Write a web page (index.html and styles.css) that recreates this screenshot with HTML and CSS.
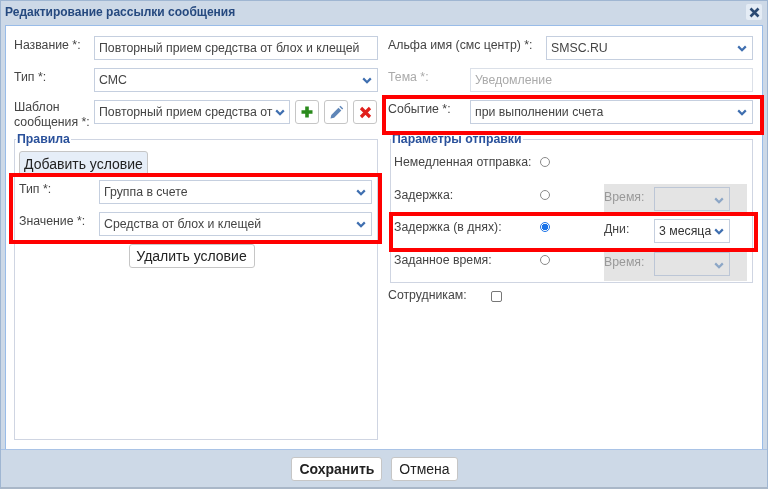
FILE: index.html
```html
<!DOCTYPE html>
<html lang="ru">
<head>
<meta charset="utf-8">
<title>Редактирование рассылки сообщения</title>
<link rel="stylesheet" href="styles.css">
</head>
<body>
<svg width="0" height="0" class="defs">
  <symbol id="chev" viewBox="0 0 10 7"><path d="M1.2 1.4 5 5.2l3.8-3.8" fill="none" stroke="currentColor" stroke-width="2.2"/></symbol>
</svg>
<div class="dialog">
  <header class="titlebar">
    <span class="title">Редактирование рассылки сообщения</span>
    <span class="close"><svg width="11" height="11" viewBox="0 0 11 11"><path d="M1.5 1.5l8 8M9.5 1.5l-8 8" stroke="#2b4a73" stroke-width="2.6"/></svg></span>
  </header>
  <main class="content">
    <section class="col col-left">
      <div class="row"><label class="lbl">Название *:</label><div class="field grow">Повторный прием средства от блох и клещей</div></div>
      <div class="row"><label class="lbl">Тип *:</label><div class="field grow select">СМС<svg class="chev"><use href="#chev"/></svg></div></div>
      <div class="row"><label class="lbl lbl-two">Шаблон сообщения *:</label>
        <div class="field select tpl"><span>Повторный прием средства от</span><svg class="chev"><use href="#chev"/></svg></div>
        <div class="iconbtns">
          <button class="iconbtn"><svg width="14" height="14" viewBox="0 0 14 14"><path d="M7 1.5v11M1.5 7h11" stroke="#2a8a1c" stroke-width="3.6"/></svg></button>
          <button class="iconbtn"><svg width="15" height="15" viewBox="0 0 15 15"><path d="M1.5 13.5l.8-3.6 7.2-7.2 2.8 2.8-7.2 7.2z" fill="#5f86b8"/><path d="M10.4 1.8l1-1 2.8 2.8-1 1z" fill="#5f86b8"/></svg></button>
          <button class="iconbtn"><svg width="13" height="13" viewBox="0 0 13 13"><path d="M2 2l9 9M11 2l-9 9" stroke="#e0201c" stroke-width="3.2"/></svg></button>
        </div>
      </div>
      <fieldset class="group rules">
        <legend>Правила</legend>
        <button class="btn add">Добавить условие</button>
        <div class="row cond"><label class="lbl lbl-cond">Тип *:</label><div class="field grow select">Группа в счете<svg class="chev"><use href="#chev"/></svg></div></div>
        <div class="row cond"><label class="lbl lbl-cond">Значение *:</label><div class="field grow select">Средства от блох и клещей<svg class="chev"><use href="#chev"/></svg></div></div>
        <div class="center"><button class="btn">Удалить условие</button></div>
      </fieldset>
    </section>
    <section class="col col-right">
      <div class="row"><label class="lbl lbl-alpha">Альфа имя (смс центр) *:</label><div class="field grow select">SMSC.RU<svg class="chev"><use href="#chev"/></svg></div></div>
      <div class="row"><label class="lbl lbl-r off">Тема *:</label><div class="field grow ph">Уведомление</div></div>
      <div class="row"><label class="lbl lbl-r">Событие *:</label><div class="field grow select">при выполнении счета<svg class="chev"><use href="#chev"/></svg></div></div>
      <fieldset class="group params">
        <legend>Параметры отправки</legend>
        <div class="send"><span class="slabel">Немедленная отправка:</span><span class="radio"></span></div>
        <div class="send"><span class="slabel">Задержка:</span><span class="radio"></span>
          <div class="extra gray"><span class="xlabel">Время:</span><div class="field mini dis select"><svg class="chev"><use href="#chev"/></svg></div></div></div>
        <div class="send"><span class="slabel">Задержка (в днях):</span><span class="radio on"></span>
          <div class="extra"><span class="xlabel dark">Дни:</span><div class="field mini select dark-t">3 месяца<svg class="chev"><use href="#chev"/></svg></div></div></div>
        <div class="send"><span class="slabel">Заданное время:</span><span class="radio"></span>
          <div class="extra gray"><span class="xlabel">Время:</span><div class="field mini dis select"><svg class="chev"><use href="#chev"/></svg></div></div></div>
      </fieldset>
      <div class="staff"><span class="slabel-staff">Сотрудникам:</span><span class="check"></span></div>
    </section>
  </main>
  <footer class="footer">
    <button class="btn save">Сохранить</button>
    <button class="btn">Отмена</button>
  </footer>
  <div class="mark m1"></div>
  <div class="mark m2"></div>
  <div class="mark m3"></div>
</div>
</body>
</html>
```
FILE: styles.css
```css
* { box-sizing: border-box; }
html, body { margin: 0; height: 100%; }
body { font: 12.3px "Liberation Sans", Arial, sans-serif; color: #444; background: #cdd9e7; overflow: hidden; }
.defs { position: absolute; }
.dialog { position: relative; height: 489px; display: flex; flex-direction: column; background: #cdd9e7; border-left: 1px solid #9fb6d2; border-right: 1px solid #9fb6d2; border-top: 1px solid #9fb6d2; border-bottom: 2px solid #a9b7c8; filter: blur(.35px); }
.titlebar { height: 24px; display: flex; align-items: center; justify-content: space-between; padding: 0 5px 3px 4px; }
.title { font-weight: 700; font-size: 12px; color: #25497f; }
.close { width: 16px; height: 16px; margin-top: 1px; background: #e4ecf5; border-radius: 2px; display: flex; align-items: center; justify-content: center; }
.content { flex: 1; margin: 0 4px; background: #fff; border: 1px solid #99bce8; border-bottom: 0; display: grid; grid-template-columns: 364px 364px; column-gap: 11px; padding: 10px 0 0 8px; }
.col { display: flex; flex-direction: column; }
.row { display: flex; align-items: flex-start; margin-bottom: 8px; height: 24px; }
.lbl { width: 80px; flex: none; line-height: 15px; padding-top: 2px; }
.lbl-two { margin-top: -2px; line-height: 15px; }
.lbl-alpha { width: 158px; }
.col-right .lbl { margin-left: -1px; }
.lbl-r { width: 82px; }
.off { color: #aaa; }
.field { height: 24px; border: 1px solid #c5cfdf; background: #fff; line-height: 23px; padding-left: 4px; color: #444; position: relative; white-space: nowrap; }
.grow { flex: 1; }
.select { padding-right: 20px; }
.ph { color: #aaa; border-color: #dbe0e8; }
.chev { position: absolute; right: 5px; top: 8px; width: 10px; height: 7px; color: #3f6fb0; }
.tpl { width: 196px; flex: none; padding-right: 16px; }
.tpl .chev { right: 4px; }
.iconbtns { display: flex; gap: 5px; margin-left: 5px; }
.iconbtn { width: 24px; height: 24px; padding: 0; display: flex; align-items: center; justify-content: center; background: #fff; border: 1px solid #c6c6c6; border-radius: 3px; }
.group { margin: 0; padding: 0; border: 1px solid #cfd5e2; position: relative; min-width: 0; }
.group legend { font-weight: 700; font-size: 12.3px; color: #2a519b; padding: 0 1px; margin-left: -3px; line-height: 14px; }
.rules { width: 364px; height: 308px; margin-top: 0; padding: 5px 5px 0 4px; }
.btn { height: 24px; padding: 0 7px; font: 14px "Liberation Sans", Arial, sans-serif; color: #222; background: #fff; border: 1px solid #c6c6c6; border-radius: 3px; }
.add { display: block; height: 25px; width: 129px; background: #e6eef8; padding: 0; margin-bottom: 4px; }
.cond { margin-bottom: 8px; }
.lbl-cond { width: 80px; }
.center { display: flex; justify-content: center; margin-top: 5px; padding-right: 8px; }
.center .btn { width: 126px; padding: 0; }
.params { width: 363px; height: 151px; margin-left: 1px; padding: 5px 0 0; }
.params legend { margin-left: 0; }
.send { display: flex; align-items: flex-start; height: 32.5px; padding-left: 3px; }
.slabel { width: 145px; flex: none; line-height: 15px; padding-top: 4px; }
.radio { width: 10px; height: 10px; border: 1px solid #8a8a8a; border-radius: 50%; flex: none; margin: 6px 0 0 1px; background: #fff; }
.radio.on { border: 1px solid #1a73e8; background: radial-gradient(circle, #1a73e8 0 3px, #fff 3.5px); }
.extra { margin-left: 54px; width: 143px; height: 32px; display: flex; align-items: flex-start; padding-top: 3px; }
.gray { background: #e4e4e4; }
.xlabel { width: 50px; flex: none; color: #999; line-height: 15px; padding-top: 3px; }
.xlabel.dark { color: #444; }
.mini { width: 76px; flex: none; padding-right: 0; }
.dis { background: #e4e4e4; border-color: #bcc6d6; }
.dis .chev { color: #8ca6c6; right: 3px; top: 9px; }
.dark-t { color: #333; }
.mini .chev { right: 5px; }
.staff { display: flex; align-items: flex-start; padding-top: 5px; margin-left: -1px; }
.slabel-staff { width: 103px; line-height: 15px; }
.check { width: 11px; height: 11px; border: 1px solid #777; border-radius: 2px; margin-top: 3px; background: #fff; }
.footer { height: 38px; flex: none; border-top: 1px solid #a9c3e6; display: flex; justify-content: center; align-items: center; gap: 9px; padding-right: 19px; padding-top: 1px; }
.save { font-weight: 700; }
.mark { position: absolute; border: 4px solid #f00; pointer-events: none; }
.m1 { left: 381px; top: 94px; width: 382px; height: 40px; }
.m2 { left: 8px; top: 172px; width: 373px; height: 71px; }
.m3 { left: 388px; top: 211px; width: 369px; height: 40px; }
```
